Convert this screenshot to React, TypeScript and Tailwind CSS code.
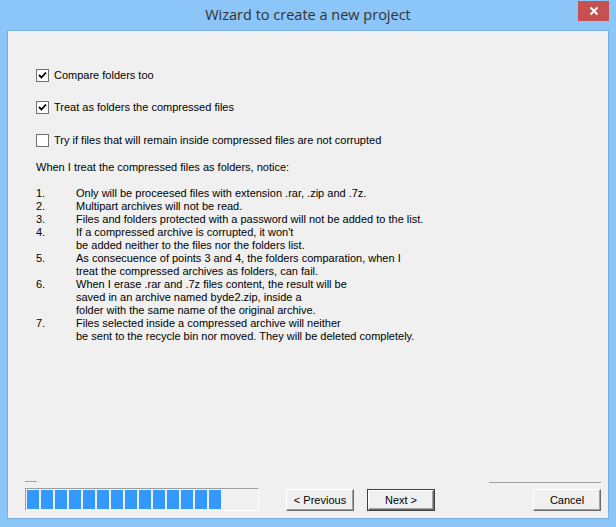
import React from "react";

const NOTES: { n: string; lines: string[] }[] = [
  { n: "1.", lines: ["Only will be proceesed files with extension .rar, .zip and .7z."] },
  { n: "2.", lines: ["Multipart archives will not be read."] },
  { n: "3.", lines: ["Files and folders protected with a password will not be added to the list."] },
  { n: "4.", lines: ["If a compressed archive is corrupted, it won't", "be added neither to the files nor the folders list."] },
  {
    n: "5.",
    lines: ["As consecuence of points 3 and 4, the folders comparation, when I", "treat the compressed archives as folders, can fail."],
  },
  {
    n: "6.",
    lines: [
      "When I erase .rar and .7z files content, the result will be",
      "saved in an archive named byde2.zip, inside a",
      "folder with the same name of the original archive.",
    ],
  },
  {
    n: "7.",
    lines: ["Files selected inside a compressed archive will neither", "be sent to the recycle bin nor moved. They will be deleted completely."],
  },
];

function Check({ checked, label }: { checked: boolean; label: string }) {
  return (
    <div className="flex h-[13px] items-center gap-[5px]">
      <span className="flex h-[13px] w-[13px] items-center justify-center border border-[#707070] bg-white">
        {checked && (
          <svg width="9" height="9" viewBox="0 0 9 9">
            <path d="M1 4 L3.5 6.5 L8 1.5" stroke="#000" strokeWidth="1.8" fill="none" />
          </svg>
        )}
      </span>
      <span>{label}</span>
    </div>
  );
}

function Btn({ label, primary }: { label: string; primary?: boolean }) {
  return (
    <button
      className={`flex h-[22px] w-[68px] shrink-0 items-center justify-center bg-[#f0f0f0] ${
        primary ? "border border-[#404040]" : ""
      }`}
    >
      <span className="flex h-full w-full items-center justify-center border-t border-l border-white border-r border-b border-r-[#696969] border-b-[#696969] shadow-[inset_-1px_-1px_0_#a0a0a0]">
        {label}
      </span>
    </button>
  );
}

export default function App() {
  return (
    <div className="flex h-[527px] w-[616px] flex-col bg-[#8cc5f7] font-['Liberation_Sans',Arial,sans-serif] text-[11px] text-black">
      <div className="relative flex h-[30px] items-center justify-center">
        <span className="font-['Open_Sans','Noto_Sans',sans-serif] text-[14.5px] text-[#333]">Wizard to create a new project</span>
        <div className="absolute right-[7px] top-[1px] flex h-[20px] w-[31px] items-center justify-center bg-[#c75050]">
          <svg width="10" height="10" viewBox="0 0 10 10">
            <path d="M1.5 1.5 L8.5 8.5 M8.5 1.5 L1.5 8.5" stroke="#fff" strokeWidth="2" />
          </svg>
        </div>
      </div>

      <div className="mx-[7px] mb-[8px] flex flex-1 flex-col border border-[#78b0e0] bg-[#f0f0f0]">
        <div className="flex flex-col pl-[28px] pt-[38px]">
          <Check checked label="Compare folders too" />
          <div className="h-[19px]" />
          <Check checked label="Treat as folders the compressed files" />
          <div className="h-[20px]" />
          <Check checked={false} label="Try if files that will remain inside compressed files are not corrupted" />

          <div className="mt-[14px] flex flex-col leading-[13px]">
            <div className="h-[13px]">When I treat the compressed files as folders, notice:</div>
            <div className="h-[13px]" />
            {NOTES.map((note) => (
              <div key={note.n} className="flex">
                <div className="w-[40px] shrink-0">{note.n}</div>
                <div className="flex flex-col">
                  {note.lines.map((l) => (
                    <div key={l} className="h-[13px] whitespace-nowrap">
                      {l}
                    </div>
                  ))}
                </div>
              </div>
            ))}
          </div>
        </div>

        <div className="mt-auto flex items-end pl-[17px] pr-[7px] pb-[7px]">
          <div className="flex flex-col">
            <div className="mb-[6px] h-px w-[12px] bg-[#a0a0a0]" />
            <div className="flex h-[23px] w-[234px] gap-[2px] border-t border-l border-[#a0a0a0] border-r-white border-b-white border-r border-b p-[1px]">
              {Array.from({ length: 14 }).map((_, i) => (
                <div key={i} className="h-[19px] w-[12px] bg-[#3399ff]" />
              ))}
            </div>
          </div>
          <div className="ml-[27px]">
            <Btn label="< Previous" />
          </div>
          <div className="ml-[13px]">
            <Btn label="Next >" primary />
          </div>
          <div className="ml-auto flex flex-col items-end">
            <div className="mb-[6px] h-px w-[112px] bg-[#a0a0a0]" />
            <Btn label="Cancel" />
          </div>
        </div>
      </div>
    </div>
  );
}
